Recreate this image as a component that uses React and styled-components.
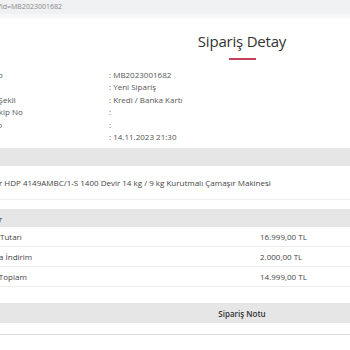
import React from "react";
import styled, { createGlobalStyle } from "styled-components";

const GlobalStyle = createGlobalStyle`
  html, body { margin: 0; padding: 0; background: #fff; overflow: hidden; }
  body { font-family: "Open Sans", "Noto Sans", sans-serif; color: #444; }
`;

const TopBar = styled.div`
  height: 14px;
  background: #f0f1f3;
  border-bottom: 4px solid #f6f7f8;
  font-size: 7px;
  line-height: 13px;
  color: #888;
  text-indent: -2px;
  white-space: nowrap;
`;

const Page = styled.div`
  margin-left: -40px;
  width: 564px;
`;

const TitleBlock = styled.div`
  display: flex;
  flex-direction: column;
  align-items: center;
  padding-top: 12px;
`;

const Title = styled.h1`
  margin: 0;
  font-size: 15px;
  font-weight: 400;
  line-height: 22px;
  color: #333;
  letter-spacing: -0.2px;
`;

const Underline = styled.div`
  width: 27px;
  height: 2px;
  background: #c8415b;
  margin-top: 6px;
`;

const InfoGrid = styled.div`
  display: grid;
  grid-template-columns: 144px 1fr;
  padding-left: 5px;
  margin-top: 9px;
  font-size: 8px;
  line-height: 12.4px;
  color: #555;
`;

const InfoLabel = styled.span`
  margin-left: ${(p) => p.$shift || 0}px;
`;

const Band = styled.div`
  height: ${(p) => p.$h || 18}px;
  background: #e6e6e6;
  display: flex;
  align-items: center;
  justify-content: ${(p) => (p.$center ? "center" : "flex-start")};
  padding-left: ${(p) => (p.$center ? 0 : 5)}px;
  font-size: 8px;
  font-weight: ${(p) => (p.$bold ? 600 : 400)};
  color: #333;
  margin-top: ${(p) => p.$mt || 0}px;
`;

const ProductRow = styled.div`
  height: 33px;
  display: flex;
  align-items: center;
  padding-left: 15px;
  border-bottom: 1px solid #eee;
  font-size: 8px;
  color: #444;
  white-space: nowrap;
`;

const TotalRow = styled.div`
  display: grid;
  grid-template-columns: 300px 1fr;
  height: 19px;
  align-items: center;
  border-bottom: 1px solid #eee;
  font-size: 8px;
  color: #444;
`;

const TotalLabel = styled.span`
  margin-left: ${(p) => p.$shift || 0}px;
`;

const BottomLine = styled.div`
  height: 11px;
  border-bottom: 1px solid #ddd;
`;

const info = [
  ["Sipariş No", ": MB2023001682", 0],
  ["Durum", ": Yeni Sipariş", 0],
  ["Ödeme Şekli", ": Kredi / Banka Kartı", 4],
  ["Kargo Takip No", ":", 1],
  ["Fatura No", ":", 0],
  ["Tarih", ": 14.11.2023 21:30", 0],
];

const totals = [
  ["Ürün Tutarı", "16.999,00 TL", 19],
  ["Kampanya İndirim", "2.000,00 TL", 4],
  ["Genel Toplam", "14.999,00 TL", 15],
];

export default function App() {
  return (
    <>
      <GlobalStyle />
      <TopBar>?id=MB2023001682</TopBar>
      <Page>
        <TitleBlock>
          <Title>Sipariş Detay</Title>
          <Underline />
        </TitleBlock>
        <InfoGrid>
          {info.map(([l, v, s]) => (
            <React.Fragment key={l}>
              <InfoLabel $shift={s}>{l}</InfoLabel>
              <span>{v}</span>
            </React.Fragment>
          ))}
        </InfoGrid>
        <Band $mt={5}>Ürünler</Band>
        <ProductRow>
          Hoover HDP 4149AMBC/1-S 1400 Devir 14 kg / 9 kg Kurutmalı Çamaşır Makinesi
        </ProductRow>
        <Band $mt={9}>Ödemeler</Band>
        {totals.map(([l, v, s]) => (
          <TotalRow key={l}>
            <TotalLabel $shift={s}>{l}</TotalLabel>
            <span>{v}</span>
          </TotalRow>
        ))}
        <Band $mt={16} $h={20} $center $bold>Sipariş Notu</Band>
        <BottomLine />
      </Page>
    </>
  );
}
